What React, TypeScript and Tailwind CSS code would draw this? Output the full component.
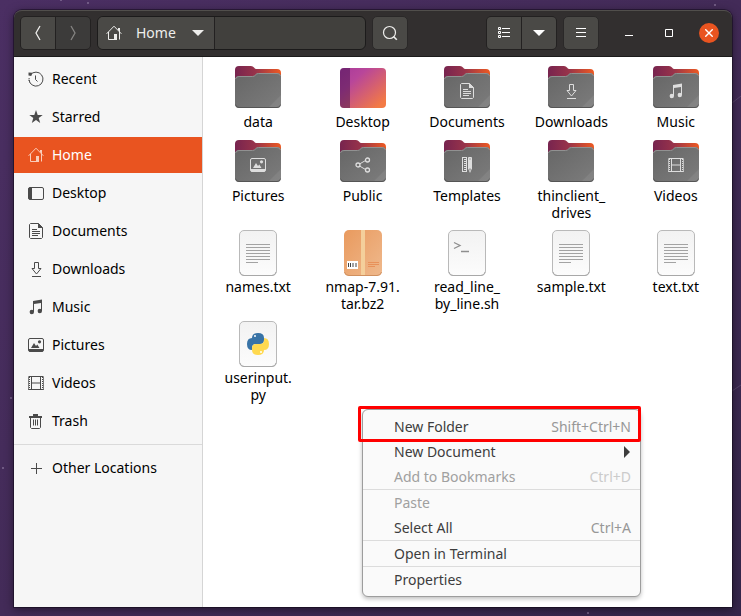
import type { ReactNode } from "react";

type IconName =
  | "recent" | "starred" | "home" | "desktop" | "documents" | "downloads"
  | "music" | "pictures" | "videos" | "trash" | "plus" | "public" | "templates";

const glyphs: Record<IconName, ReactNode> = {
  recent: (
    <>
      <path d="M2.4 3.9A7 7 0 1 1 1 8.6" fill="none" stroke="currentColor" />
      <path d="M7.5 4.5v4l2 2" fill="none" stroke="currentColor" />
      <path d="M.5 1.5l3.8.3-1 3.3-2.8-.6z" fill="currentColor" />
      <path d="M1.1 7v3M2 11.5l1 1.5" stroke="currentColor" strokeDasharray="1 1" />
    </>
  ),
  starred: <path d="M8 1l1.7 4.9h5l-4 3.1 1.5 5L8 11l-4.2 3 1.5-5-4-3.1h5z" fill="currentColor" />,
  home: (
    <>
      <path d="M.6 8.8L8 1.2l7.4 7.6M2.5 7v7.5H8M13.5 3v11.5" fill="none" stroke="currentColor" />
      <path d="M8 9h3v6H8zM12 3h2v2.5h-2z" fill="currentColor" />
    </>
  ),
  desktop: (
    <>
      <rect x=".5" y="2.5" width="15" height="12" rx="1.5" fill="none" stroke="currentColor" />
      <path d="M1.5 2.5H4v12H1.5l-1-1v-10z" fill="currentColor" />
    </>
  ),
  documents: (
    <>
      <path d="M10.5.5h-8l-1 1v13l1 1h11l1-1v-10z" fill="none" stroke="currentColor" />
      <path d="M10 0l5 5h-5z" fill="currentColor" />
      <path d="M4 6.5h5M4 8.5h8M4 10.5h8M4 12.5h6" stroke="currentColor" />
    </>
  ),
  downloads: (
    <path d="M6.5 1.5h4v6h2.5L8.500 13 4 7.5h2.5zM4 15.5h9" fill="none" stroke="currentColor" />
  ),
  music: (
    <>
      <path d="M5 13V2l9-1.5V12h-1V4L6 5v8z" fill="currentColor" />
      <circle cx="3.8" cy="13" r="2.2" fill="currentColor" />
      <circle cx="11.8" cy="12" r="2.2" fill="currentColor" />
    </>
  ),
  pictures: (
    <>
      <rect x=".5" y="1.5" width="15" height="13" rx="1.5" fill="none" stroke="currentColor" />
      <path d="M1 12h14v2.5H1zM3 11l3-5 2 3 1.3-1.5L11.5 11z" fill="currentColor" />
      <circle cx="11.5" cy="4.8" r="1.6" fill="currentColor" />
    </>
  ),
  videos: (
    <>
      <path d="M1.5 2v13M14.5 2v13" stroke="currentColor" strokeDasharray="1 1" />
      <path d="M.5 1.5h15M.5 14.5h15M3.5 2v12.5M12.5 2v12.5M3.5 8h9" stroke="currentColor" />
      <path d="M.5 2v13M15.5 2v13" stroke="currentColor" strokeOpacity=".7" />
    </>
  ),
  trash: (
    <>
      <path d="M5 1h5v2h4v2H1V3h4z" fill="currentColor" />
      <path d="M2.5 5v9.5l1 1h8l1-1V5" fill="none" stroke="currentColor" />
      <path d="M5.5 6.5v6M7.5 6.5v6M9.5 6.5v6" stroke="currentColor" />
    </>
  ),
  plus: <path d="M8.5 3v11M3 8.5h11" stroke="currentColor" />,
  public: (
    <>
      <path d="M4.5 7l6-3.500M4.5 9l6 3.5" stroke="currentColor" />
      <g fill="none" stroke="currentColor" strokeWidth="1.3">
        <circle cx="3" cy="8" r="2" />
        <circle cx="12.5" cy="3" r="2" />
        <circle cx="12.5" cy="13" r="2" />
      </g>
    </>
  ),
  templates: (
    <>
      <rect x="3.5" y=".5" width="4" height="14" fill="none" stroke="currentColor" />
      <path d="M5 2.5h2M5 4.5h2M5 6.5h2M5 8.5h2M5 10.5h2M5 12.5h2" stroke="currentColor" />
      <path d="M9 1q0-1 1-1h2q1 0 1 1v10.5L11 16l-2-4.5z" fill="currentColor" />
      <path d="M11 1.5v1M11 11.5v2" stroke="#707070" />
    </>
  ),
};

function Glyph({ name }: { name: IconName }) {
  return (
    <svg viewBox="0 0 16 16" className="w-4 h-4 shrink-0" aria-hidden="true">
      {glyphs[name]}
    </svg>
  );
}

const places: { label: string; icon: IconName }[] = [
  { label: "Recent", icon: "recent" },
  { label: "Starred", icon: "starred" },
  { label: "Home", icon: "home" },
  { label: "Desktop", icon: "desktop" },
  { label: "Documents", icon: "documents" },
  { label: "Downloads", icon: "downloads" },
  { label: "Music", icon: "music" },
  { label: "Pictures", icon: "pictures" },
  { label: "Videos", icon: "videos" },
  { label: "Trash", icon: "trash" },
];

type FileKind = "folder" | "desktop" | "text" | "archive" | "script" | "python";

const files: { lines: string[]; kind: FileKind; icon?: IconName }[] = [
  { lines: ["data"], kind: "folder" },
  { lines: ["Desktop"], kind: "desktop" },
  { lines: ["Documents"], kind: "folder", icon: "documents" },
  { lines: ["Downloads"], kind: "folder", icon: "downloads" },
  { lines: ["Music"], kind: "folder", icon: "music" },
  { lines: ["Pictures"], kind: "folder", icon: "pictures" },
  { lines: ["Public"], kind: "folder", icon: "public" },
  { lines: ["Templates"], kind: "folder", icon: "templates" },
  { lines: ["thinclient_", "drives"], kind: "folder" },
  { lines: ["Videos"], kind: "folder", icon: "videos" },
  { lines: ["names.txt"], kind: "text" },
  { lines: ["nmap-7.91.", "tar.bz2"], kind: "archive" },
  { lines: ["read_line_", "by_line.sh"], kind: "script" },
  { lines: ["sample.txt"], kind: "text" },
  { lines: ["text.txt"], kind: "text" },
  { lines: ["userinput.", "py"], kind: "python" },
];

// Gradients shared by every file icon
function IconDefs() {
  return (
    <svg className="absolute w-0 h-0" aria-hidden="true">
      <defs>
        <linearGradient id="folder-back" x1="0" y1="0" x2="1" y2="0">
          <stop offset="0" stopColor="#77244f" />
          <stop offset=".45" stopColor="#98334a" />
          <stop offset="1" stopColor="#ee5a22" />
        </linearGradient>
        <linearGradient id="folder-front" x1="0" y1="0" x2="1" y2="1">
          <stop offset="0" stopColor="#666" />
          <stop offset="1" stopColor="#7c7c7c" />
        </linearGradient>
        <linearGradient id="desktop-fill" x1="0" y1="0" x2="1" y2="1">
          <stop offset="0" stopColor="#a93a9b" />
          <stop offset=".3" stopColor="#b8469a" />
          <stop offset=".9" stopColor="#f37a45" />
        </linearGradient>
        <linearGradient id="paper" x1="0" y1="0" x2="0" y2="1">
          <stop offset="0" stopColor="#f2f2f2" />
          <stop offset="1" stopColor="#fcfcfc" />
        </linearGradient>
        <linearGradient id="box" x1="0" y1="0" x2="1" y2="1">
          <stop offset="0" stopColor="#e99a5e" />
          <stop offset="1" stopColor="#efb98d" />
        </linearGradient>
      </defs>
    </svg>
  );
}

function Folder({ icon }: { icon?: IconName }) {
  return (
    <svg viewBox="0 0 48 48" className="w-12 h-12" aria-hidden="true">
      <path d="M1 15V5q0-4 4-4h12q2 0 3 1.5T22.5 4H43q4 0 4 4v7z" fill="url(#folder-back)" />
      <path d="M1 15q0-4 4-4h13.5q2 0 3-1.5T24.5 8H43q4 0 4 4v27q0 4-4 4H5q-4 0-4-4z" fill="url(#folder-front)" />
      <path d="M1.5 14q.5-2.5 3.5-2.5h13.5q2 0 3-1.5t3-1.5H43q3 0 3.5 2.5" fill="none" stroke="#919191" />
      <path d="M1.5 39.5q.5 3 3.5 3h38q3 0 3.5-3" fill="none" stroke="#555" />
      <path d="M47 30v9q0 3-4 3H35z" fill="#fff" fillOpacity=".07" />
      {icon && (
        <svg x="16" y="18" width="16" height="16" viewBox="0 0 16 16" className="text-[#dedede]">
          {glyphs[icon]}
        </svg>
      )}
    </svg>
  );
}

function Paper({ children }: { children: ReactNode }) {
  return (
    <svg viewBox="0 0 48 48" className="w-12 h-12" aria-hidden="true">
      <rect x="5.5" y=".5" width="37" height="45" rx="4.5" fill="url(#paper)" stroke="#b9b9b9" />
      <path d="M6 42q.5 3.5 4 3.5h28q3.5 0 4-3.5" fill="none" stroke="#a8a8a8" />
      {children}
    </svg>
  );
}

function FileIcon({ kind, icon }: { kind: FileKind; icon?: IconName }) {
  switch (kind) {
    case "folder":
      return <Folder icon={icon} />;
    case "desktop":
      return (
        <svg viewBox="0 0 48 48" className="w-12 h-12" aria-hidden="true">
          <rect x="1" y="3" width="46" height="40" rx="4" fill="url(#desktop-fill)" />
          <path d="M11 3H5q-4 0-4 4v32q0 4 4 4h6z" fill="#350a45" fillOpacity=".45" />
        </svg>
      );
    case "text":
      return (
        <Paper>
          <path d="M12 14.5h24M12 17.5h24M12 20.5h24M12 23.5h24M12 26.5h24M12 29.5h24M12 32.5h12" stroke="#a3a3a3" />
        </Paper>
      );
    case "script":
      return (
        <Paper>
          <path d="M11 12.5l6 3-6 3M18 21.5h8" fill="none" stroke="#8e8e8e" strokeWidth="1.3" />
        </Paper>
      );
    case "python":
      return (
        <Paper>
          <g transform="translate(13 12)">
            <path d="M5 5Q5 0 11 0t6 5v2q0 4-4 4H9q-4 0-4 4v2Q0 17 0 11t5-6z" fill="#3873a6" />
            <path d="M17 17q0 5-6 5t-6-5v-2q0-4 4-4h4q4 0 4-4V5q5 0 5 6t-5 6z" fill="#ffd94f" />
            <circle cx="8" cy="3" r="1" fill="#fff" />
            <circle cx="14" cy="19" r="1" fill="#fff" />
          </g>
        </Paper>
      );
    case "archive":
      return (
        <svg viewBox="0 0 48 48" className="w-12 h-12" aria-hidden="true">
          <rect x="5" y="0" width="38" height="46" rx="5" fill="url(#box)" />
          <path d="M5.5 42q.5 3.5 4.5 3.5h28q4 0 4.5-3.5" fill="none" stroke="#d0905f" />
          <path d="M22 0h4v45h-4z" fill="#f4cf9b" />
          <path d="M8 31h11v8H8z" fill="#fff" />
          <path d="M9.5 33v4M11.5 33v4M14 33v4M17 33v4" stroke="#444" />
          <path d="M29 32.5h11M29 34.5h11M29 36.5h7" stroke="#e8915a" />
        </svg>
      );
  }
}

const menuGroups: { label: string; shortcut?: string; submenu?: boolean; disabled?: boolean }[][] = [
  [
    { label: "New Folder", shortcut: "Shift+Ctrl+N" },
    { label: "New Document", submenu: true },
    { label: "Add to Bookmarks", shortcut: "Ctrl+D", disabled: true },
  ],
  [
    { label: "Paste", disabled: true },
    { label: "Select All", shortcut: "Ctrl+A" },
  ],
  [{ label: "Open in Terminal" }],
  [{ label: "Properties" }],
];

function ContextMenu() {
  return (
    <div className="absolute right-[91px] bottom-2.5 w-[279px] rounded-md border border-[#9d9d9d] bg-[#fafafa] py-1 shadow-[0_2px_4px_rgba(0,0,0,0.25)]">
      {menuGroups.map((group, i) => (
        <div key={i} className={i > 0 ? "border-t border-[#dcdcdc]" : ""}>
          {group.map(item => (
            <button
              key={item.label}
              disabled={item.disabled}
              className="flex w-full h-[25px] items-center justify-between pl-[31px] pr-[9px] text-[#3d3d3d] disabled:text-[#a0a0a0]">
              <span>{item.label}</span>
              {item.shortcut && (
                <span className={item.disabled ? "text-[#cbcbcb]" : "text-[#979797]"}>{item.shortcut}</span>
              )}
              {item.submenu && (
                <svg viewBox="0 0 8 12" className="w-2 h-3" aria-hidden="true">
                  <path d="M1 0l6 6-6 6z" fill="#3d3d3d" />
                </svg>
              )}
            </button>
          ))}
        </div>
      ))}
      <div className="pointer-events-none absolute -left-[5px] -right-px -top-1 h-9 rounded-xs border-3 border-[#ff0000]" />
    </div>
  );
}

const toolButton = "flex h-8 w-[34px] items-center justify-center bg-[#4a4946] text-[#eeeeec]";

function HeaderBar() {
  return (
    <header className="flex h-[47px] shrink-0 items-center rounded-t-lg border-t border-b border-t-[#514f4c] border-b-[#1c1b1b] bg-[#322f2f] pl-1.5 pr-[13px] pb-px">
      <div className="flex gap-px rounded-[5px] border border-[#232121] bg-[#232121] overflow-hidden">
        <button className={toolButton} aria-label="Back">
          <svg viewBox="0 0 16 16" className="w-4 h-4" aria-hidden="true">
            <path d="M10 1L6 8l4 7" fill="none" stroke="currentColor" strokeWidth="1.3" />
          </svg>
        </button>
        <button className="flex h-8 w-[34px] items-center justify-center bg-[#3c3b3a] text-[#858482]" aria-label="Forward">
          <svg viewBox="0 0 16 16" className="w-4 h-4" aria-hidden="true">
            <path d="M6 1l4 7-4 7" fill="none" stroke="currentColor" strokeWidth="1.3" />
          </svg>
        </button>
      </div>
      <div className="ml-1.5 flex w-[269px] rounded-md border border-[#1c1b1b] bg-[#41403d] overflow-hidden">
        <button className="flex h-8 w-[117px] items-center border-r border-[#232121] bg-[#4a4946] pl-2 text-[#eeeeec]">
          <Glyph name="home" />
          <span className="ml-3.5">Home</span>
          <svg viewBox="0 0 12 6" className="ml-auto mr-2.5 w-3 h-1.5" aria-hidden="true">
            <path d="M0 0h12L6 6z" fill="currentColor" />
          </svg>
        </button>
      </div>
      <button className={`${toolButton} ml-1.5 box-content rounded-[5px] border border-[#2a2828]`} aria-label="Search">
        <svg viewBox="0 0 16 16" className="w-4 h-4" aria-hidden="true">
          <circle cx="7.5" cy="7.5" r="6" fill="none" stroke="currentColor" strokeWidth="1.2" />
          <path d="M11.5 11.5l3.3 3.3" stroke="currentColor" strokeWidth="1.6" />
        </svg>
      </button>
      <div className="ml-auto flex gap-px rounded-[5px] border border-[#232121] bg-[#232121] overflow-hidden">
        <button className={toolButton} aria-label="List view">
          <svg viewBox="0 0 14 14" className="w-3.5 h-3.5" aria-hidden="true">
            <path d="M5 2.5h8M5 6.5h8M5 10.5h8" stroke="#fff" />
            <path d="M1.5 1.5h2v2h-2zM1.5 5.5h2v2h-2zM1.5 9.5h2v2h-2z" fill="none" stroke="#fff" />
          </svg>
        </button>
        <button className={toolButton} aria-label="View options">
          <svg viewBox="0 0 12 6" className="w-3 h-1.5" aria-hidden="true">
            <path d="M0 0h12L6 6z" fill="#fff" />
          </svg>
        </button>
      </div>
      <button className={`${toolButton} ml-1.5 box-content rounded-[5px] border border-[#2a2828]`} aria-label="Menu">
        <svg viewBox="0 0 10 10" className="w-2.5 h-2.5" aria-hidden="true">
          <path d="M0 .5h10M0 4.5h10M0 8.5h10" stroke="#fff" />
        </svg>
      </button>
      <div className="ml-5 flex items-center gap-5 text-white">
        <button className="flex h-5 w-5 items-center justify-center" aria-label="Minimize">
          <svg viewBox="0 0 8 8" className="w-2 h-2" aria-hidden="true">
            <path d="M0 6.5h8" stroke="currentColor" />
          </svg>
        </button>
        <button className="flex h-5 w-5 items-center justify-center" aria-label="Maximize">
          <svg viewBox="0 0 8 8" className="w-2 h-2" aria-hidden="true">
            <path d="M.5.5h7v7h-7z" fill="none" stroke="currentColor" />
          </svg>
        </button>
        <button className="flex h-5 w-5 items-center justify-center rounded-full bg-[#e95420]" aria-label="Close">
          <svg viewBox="0 0 8 8" className="w-2 h-2" aria-hidden="true">
            <path d="M.3.3l7.4 7.4M7.7.3L.3 7.7" stroke="currentColor" strokeWidth="1.4" />
          </svg>
        </button>
      </div>
    </header>
  );
}

function Sidebar() {
  return (
    <nav className="w-[189px] shrink-0 border-r border-[#d5d5d5] bg-[#f6f6f6] pt-1 text-black">
      <ul className="flex flex-col gap-0.5">
        {places.map(place => (
          <li key={place.label}>
            <a
              href="#"
              className={
                place.label === "Home"
                  ? "flex h-9 items-center gap-2 bg-[#e95420] pl-3.5 text-white"
                  : "flex h-9 items-center gap-2 pl-3.5"
              }>
              <span className={place.label === "Home" ? "text-[#f9cdbb]" : "text-[#4a4a4a]"}>
                <Glyph name={place.icon} />
              </span>
              {place.label}
            </a>
          </li>
        ))}
      </ul>
      <a href="#" className="mt-[5px] flex h-[46px] items-center gap-2 border-t border-[#dadada] pl-3.5">
        <span className="text-[#4a4a4a]">
          <Glyph name="plus" />
        </span>
        Other Locations
      </a>
    </nav>
  );
}

export default function App() {
  return (
    <div className="relative flex min-h-screen flex-col bg-linear-to-br from-[#4b2f63] via-[#432b58] to-[#35264b] pt-2.5 pr-[9px] pb-[9px] pl-3.5 font-['Noto_Sans','Open_Sans',sans-serif] text-sm">
      <IconDefs />
      {/* faint stars on the wallpaper */}
      <svg className="absolute inset-0 w-full h-full" aria-hidden="true">
        <path d="M60 0h2v1h-2zM87 2h2v2h-2zM714 4h2v2h-2zM10 397h2v2h-2zM2 467h2v2h-2zM587 612h2v2h-2z" fill="#8d7aa0" fillOpacity=".6" />
        <path d="M732 103l9-7M732 391l9-6" stroke="#66557a" strokeOpacity=".6" />
      </svg>
      <div className="relative flex flex-1 flex-col rounded-t-lg shadow-[0_2px_10px_rgba(0,0,0,0.5),0_0_0_1px_rgba(20,10,30,0.5)]">
        <HeaderBar />
        <div className="flex flex-1">
          <Sidebar />
          <main className="flex-1 bg-white pl-[3px] pr-1 pt-2 text-black">
            <ul className="grid grid-cols-5 gap-y-[9px]">
              {files.map(file => (
                <li key={file.lines.join("")} className="flex flex-col items-center text-center leading-[17px]">
                  <FileIcon kind={file.kind} icon={file.icon} />
                  {file.lines.map(line => (
                    <span key={line}>{line}</span>
                  ))}
                </li>
              ))}
            </ul>
          </main>
        </div>
        <ContextMenu />
      </div>
    </div>
  );
}
